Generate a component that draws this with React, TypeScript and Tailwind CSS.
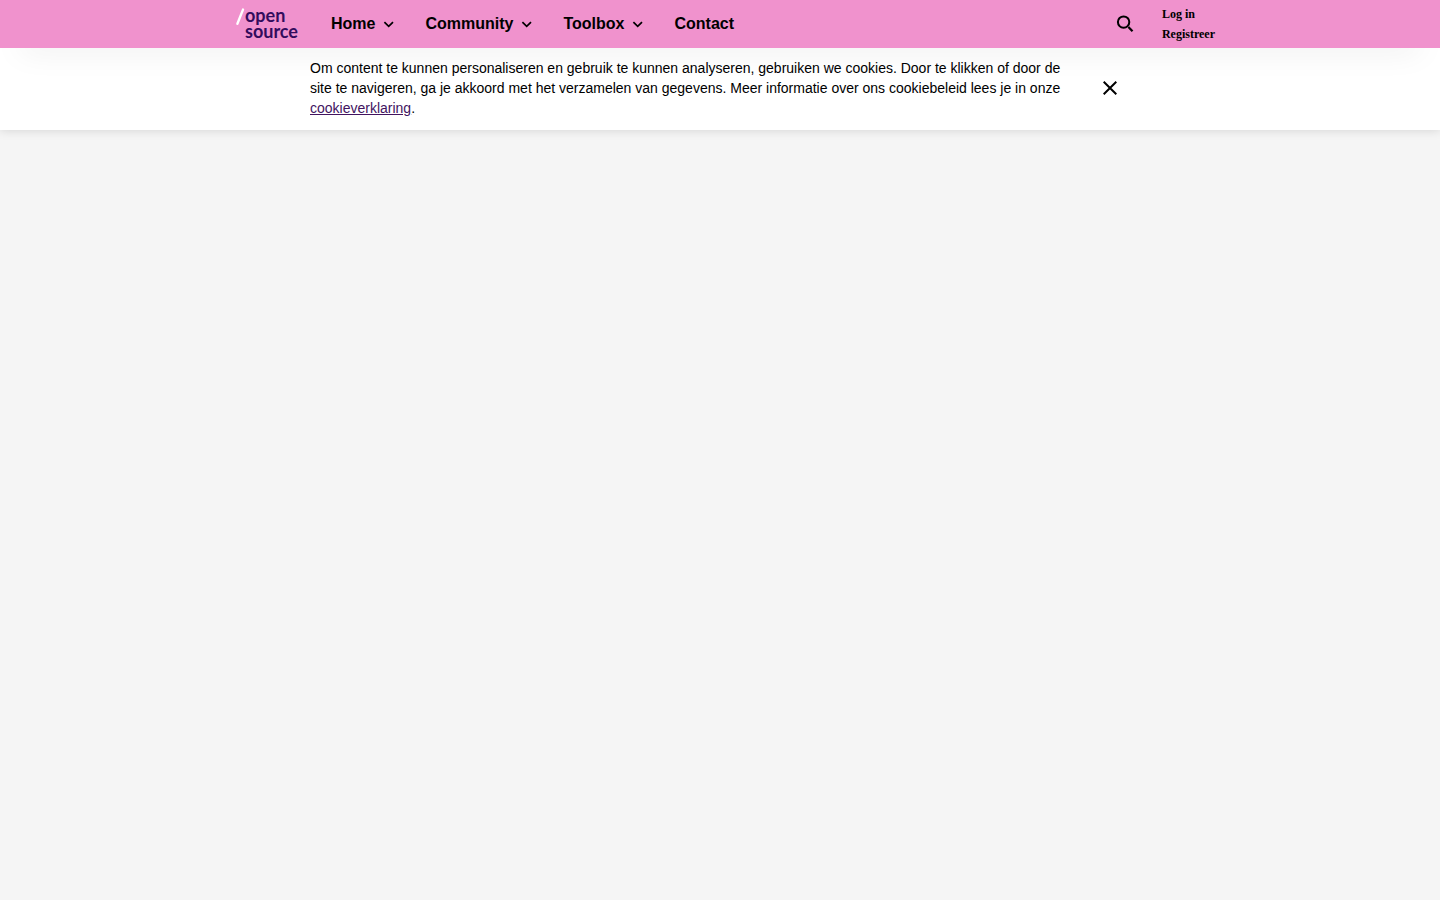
import { useState } from "react";

const menu = [
  { label: "Home", expandable: true },
  { label: "Community", expandable: true },
  { label: "Toolbox", expandable: true },
  { label: "Contact", expandable: false },
];

function Logo() {
  return (
    <span className="flex h-12 w-16 font-[Lato,sans-serif] text-lg leading-4 font-bold text-[#330c5c]">
      <svg viewBox="0 0 10 48" className="h-12 w-2.5 shrink-0" aria-hidden="true">
        <path d="M2.4 23.8 8 9.6" fill="none" stroke="#fff" strokeWidth="2.4" strokeLinecap="round" />
      </svg>
      <span className="flex flex-col pt-[7px]">
        <span>open</span>
        <span>source</span>
      </span>
    </span>
  );
}

function Chevron() {
  return (
    <svg viewBox="0 0 10 10" className="h-2.5 w-2.5 overflow-visible" fill="none" stroke="#000" strokeWidth="1.7" aria-hidden="true">
      <path d="m1.4 3.1 4.3 4.3L10 3.1" />
    </svg>
  );
}

function Header() {
  return (
    <header className="relative z-10 bg-[#f092cd] shadow-[0_20px_30px_-20px_rgba(0,0,0,0.15)]">
      <div className="mx-auto flex h-12 max-w-[990px] items-center">
        <a href="#home" className="ml-2.5 shrink-0">
          <Logo />
        </a>
        <nav className="ml-8 flex items-center gap-8 text-base font-bold">
          {menu.map((item) =>
            item.expandable ? (
              <button key={item.label} type="button" className="flex items-center gap-2">
                {item.label}
                <Chevron />
              </button>
            ) : (
              <a key={item.label} href="#contact">
                {item.label}
              </a>
            )
          )}
        </nav>
        <div className="ml-auto flex items-center gap-7">
          <button type="button" aria-label="Zoeken">
            <svg viewBox="0 0 18 18" className="h-[18px] w-[18px]" fill="none" stroke="#000" aria-hidden="true">
              <circle cx="7.6" cy="7.1" r="5.7" strokeWidth="2" />
              <path d="m12.4 12 4.1 4.3" strokeWidth="2.2" />
            </svg>
          </button>
          <div className="flex flex-col font-['Liberation_Serif',serif] text-xs leading-5 font-bold">
            <a href="#login">Log in</a>
            <a href="#register">Registreer</a>
          </div>
        </div>
      </div>
    </header>
  );
}

function CookieBar({ onClose }: { onClose: () => void }) {
  return (
    <section aria-label="Cookies" className="bg-white shadow-[0_0_10px_rgba(0,0,0,0.15)]">
      <div className="mx-auto flex max-w-[820px] items-center justify-between pt-2.5 pb-3">
        <p className="max-w-[760px] text-sm leading-5">
          Om content te kunnen personaliseren en gebruik te kunnen analyseren, gebruiken we cookies. Door te klikken of door de
          site te navigeren, ga je akkoord met het verzamelen van gegevens. Meer informatie over ons cookiebeleid lees je in onze{" "}
          <a href="#cookies" className="text-[#42145f] underline">
            cookieverklaring
          </a>
          .
        </p>
        <button type="button" aria-label="Sluiten" onClick={onClose} className="flex h-10 w-10 items-center justify-center">
          <svg viewBox="0 0 14 14" className="h-3.5 w-3.5" fill="none" stroke="#000" strokeWidth="2" aria-hidden="true">
            <path d="m.7.7 12.6 12.6M13.3.7.7 13.3" />
          </svg>
        </button>
      </div>
    </section>
  );
}

export default function App() {
  const [showCookies, setShowCookies] = useState(true);
  return (
    <div className="min-h-screen bg-[#f5f5f5] font-['Liberation_Sans',Arial,sans-serif] text-black">
      <Header />
      {showCookies && <CookieBar onClose={() => setShowCookies(false)} />}
    </div>
  );
}
